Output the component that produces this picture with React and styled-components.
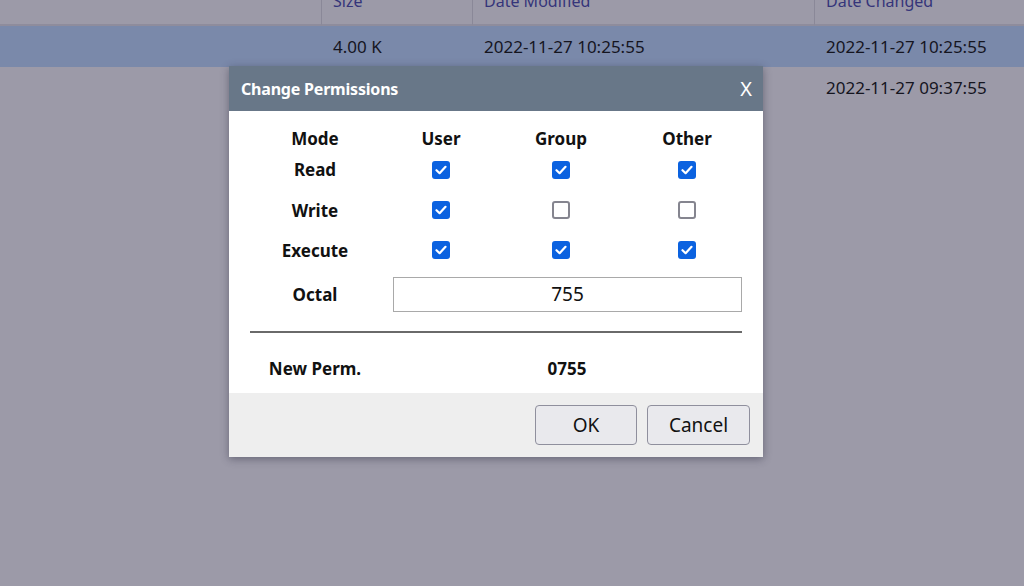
import styled, { createGlobalStyle } from 'styled-components';

const Global = createGlobalStyle`
  html, body {
    margin: 0;
    height: 100%;
    overflow: hidden;
    background: #9c9aa8;
    font-family: "Noto Sans", "Open Sans", sans-serif;
  }
`;

const Page = styled.div`
  position: relative;
  width: 1024px;
  height: 586px;
  background: #9c9aa8;
  overflow: hidden;
`;

const Grid = styled.div`
  display: grid;
  grid-template-columns: 321px 151px 342px 1fr;
`;

const HeadCell = styled.div`
  height: 26px;
  border-left: ${(p) => (p.$first ? 'none' : '1px solid #8a8898')};
  border-bottom: 2px solid #8e8c9c;
  box-sizing: border-box;
  padding-left: 11px;
  color: #35357a;
  font-size: 16px;
  line-height: 20px;
  overflow: hidden;
  span {
    display: block;
    margin-top: -9px;
  }
`;

const Cell = styled.div`
  height: 41px;
  display: flex;
  align-items: center;
  padding-left: 12px;
  font-size: 17px;
  color: #15151f;
  background: ${(p) => (p.$selected ? '#7a89aa' : 'transparent')};
`;

const Dialog = styled.div`
  position: absolute;
  left: 229px;
  top: 66px;
  width: 534px;
  background: #fff;
  box-shadow: 0 2px 8px rgba(40, 40, 60, 0.45);
`;

const TitleBar = styled.div`
  height: 45px;
  background: #687788;
  display: flex;
  align-items: center;
  justify-content: space-between;
  padding: 0 11px 0 12px;
  color: #fff;
`;

const Title = styled.div`
  font-weight: 700;
  font-size: 16px;
  letter-spacing: -0.2px;
`;

const Close = styled.div`
  font-size: 20px;
`;

const Body = styled.div`
  padding: 16px 21px 0 21px;
  height: 282px;
  box-sizing: border-box;
`;

const Matrix = styled.div`
  display: grid;
  grid-template-columns: 130px 122px 118px 134px;
  grid-template-rows: 22px 41px 40px 40px 48px;
  align-items: center;
  justify-items: center;
`;

const Label = styled.div`
  font-weight: 700;
  font-size: 17px;
  color: #111;
`;

const Box = styled.span`
  width: 18px;
  height: 18px;
  box-sizing: border-box;
  border-radius: 3px;
  display: flex;
  align-items: center;
  justify-content: center;
  background: ${(p) => (p.$on ? '#0b62e0' : '#fff')};
  border: ${(p) => (p.$on ? 'none' : '2px solid #85858f')};
`;

const OctalInput = styled.div`
  grid-column: 2 / 5;
  justify-self: stretch;
  margin: 0 12px 0 13px;
  height: 35px;
  box-sizing: border-box;
  border: 1px solid #a9a9a9;
  display: flex;
  align-items: center;
  justify-content: center;
  font-size: 19px;
  color: #111;
`;

const Divider = styled.div`
  margin-top: 13px;
  height: 2px;
  background: #6a6a6a;
`;

const PermRow = styled.div`
  display: grid;
  grid-template-columns: 130px 374px;
  height: 50px;
  margin-top: 10px;
  align-items: center;
  justify-items: center;
`;

const Footer = styled.div`
  height: 64px;
  background: #eeeeee;
  display: flex;
  justify-content: flex-end;
  align-items: center;
  gap: 10px;
  padding-right: 13px;
`;

const Button = styled.button`
  height: 40px;
  width: ${(p) => p.$w}px;
  border: 1px solid #8f8f9d;
  border-radius: 4px;
  background: #e9e9ed;
  font-family: "Noto Sans", sans-serif;
  font-size: 19px;
  color: #111;
  padding: 0;
`;

function Check({ on }) {
  return (
    <Box $on={on}>
      {on && (
        <svg width="12" height="10" viewBox="0 0 12 10">
          <path d="M1.5 5.2 L4.6 8.2 L10.5 1.8" fill="none" stroke="#fff" strokeWidth="2.2" strokeLinecap="round" strokeLinejoin="round" />
        </svg>
      )}
    </Box>
  );
}

const perms = [
  ['Read', [true, true, true]],
  ['Write', [true, false, false]],
  ['Execute', [true, true, true]],
];

export default function App() {
  return (
    <Page>
      <Global />
      <Grid>
        <HeadCell $first />
        <HeadCell><span>Size</span></HeadCell>
        <HeadCell><span>Date Modified</span></HeadCell>
        <HeadCell><span>Date Changed</span></HeadCell>
        <Cell $selected />
        <Cell $selected>4.00 K</Cell>
        <Cell $selected>2022-11-27 10:25:55</Cell>
        <Cell $selected>2022-11-27 10:25:55</Cell>
        <Cell />
        <Cell />
        <Cell />
        <Cell>2022-11-27 09:37:55</Cell>
      </Grid>

      <Dialog>
        <TitleBar>
          <Title>Change Permissions</Title>
          <Close>X</Close>
        </TitleBar>
        <Body>
          <Matrix>
            <Label>Mode</Label>
            <Label>User</Label>
            <Label>Group</Label>
            <Label>Other</Label>
            {perms.map(([name, vals]) => [
              <Label key={name}>{name}</Label>,
              ...vals.map((v, i) => <Check key={name + i} on={v} />),
            ])}
            <Label>Octal</Label>
            <OctalInput>755</OctalInput>
          </Matrix>
          <Divider />
          <PermRow>
            <Label>New Perm.</Label>
            <Label>0755</Label>
          </PermRow>
        </Body>
        <Footer>
          <Button $w={102}>OK</Button>
          <Button $w={103}>Cancel</Button>
        </Footer>
      </Dialog>
    </Page>
  );
}
